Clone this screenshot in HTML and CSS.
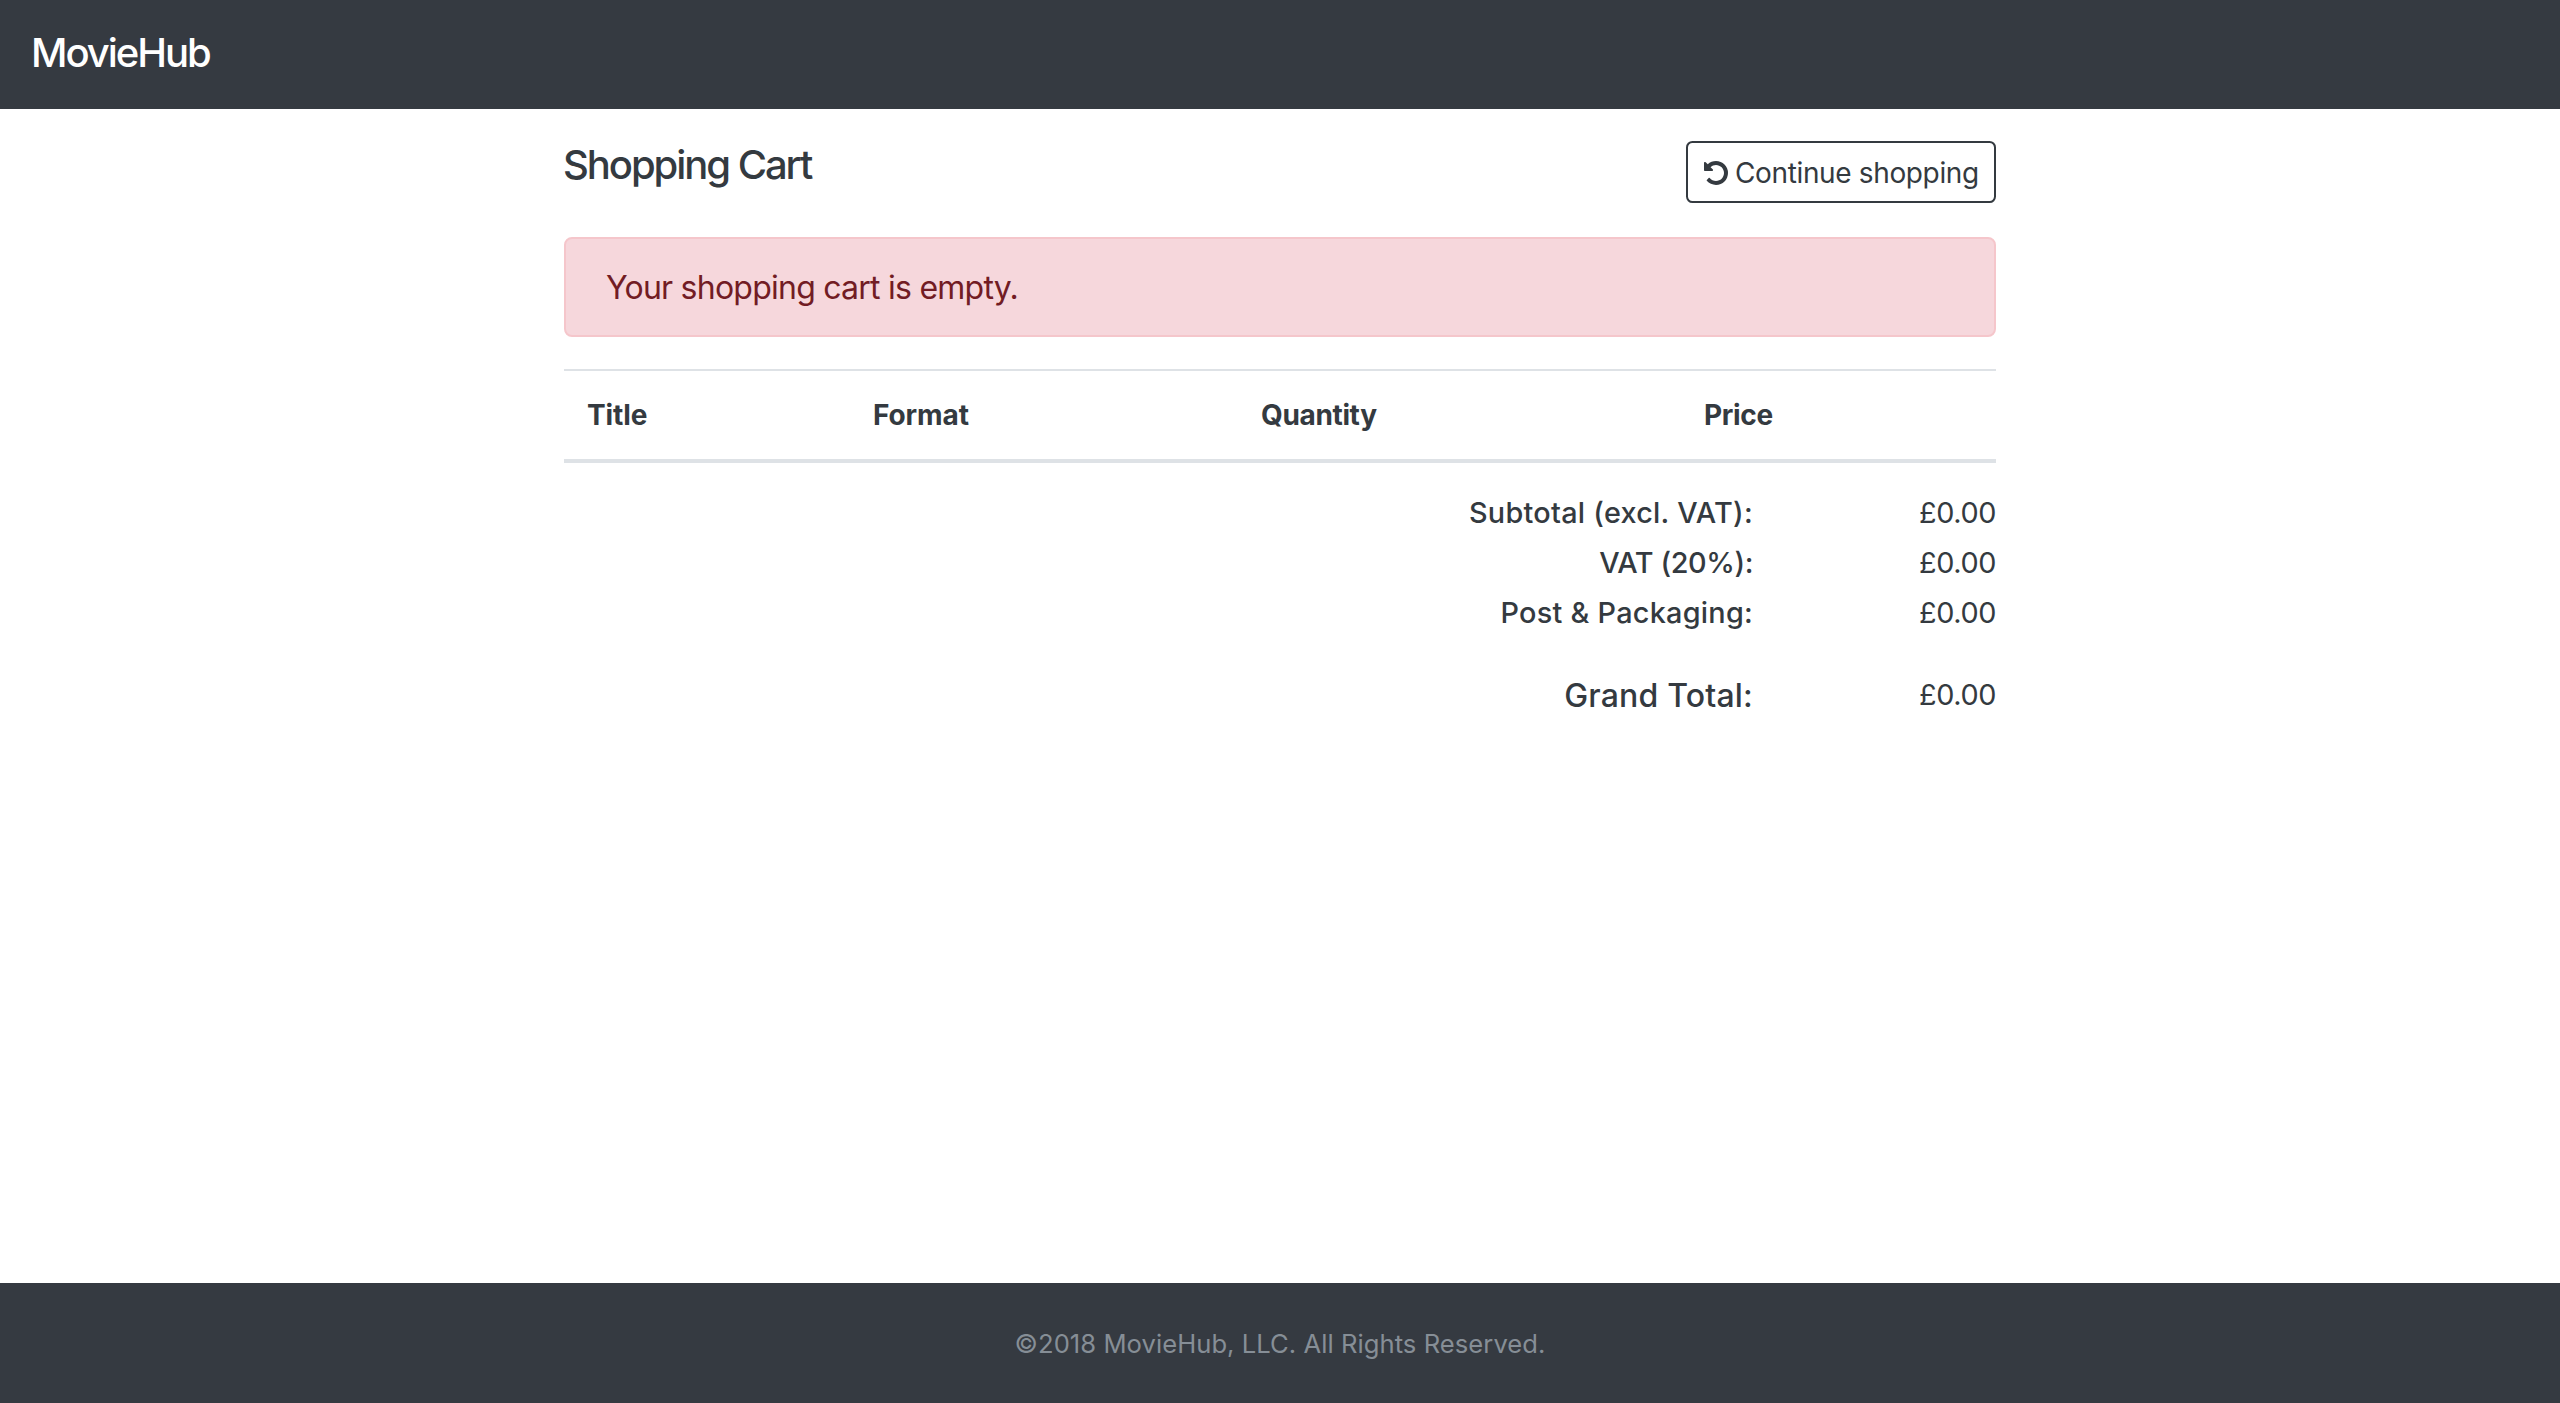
FILE: index.html
```
<!DOCTYPE html>
<html lang="en">
<head>
<meta charset="utf-8">
<title>MovieHub</title>
<link rel="stylesheet" href="styles.css">
</head>
<body>
<header class="navbar"><a class="brand">MovieHub</a></header>
<main class="container">
  <div class="cart-head">
    <h1 class="cart-title">Shopping Cart</h1>
    <a class="btn-continue">
      <svg class="icon-undo" viewBox="0 128 1536 1536" aria-hidden="true"><path fill="currentColor" d="M1536 896q0 156-61 298t-164 245-245 164-298 61q-172 0-327-72.5T177 1387q-7-10-6.5-22.5T179 1344l137-138q10-9 25-9 16 2 23 12 73 95 179 147t225 52q104 0 198.5-40.5T1130 1258t109.5-163.5T1280 896t-40.5-198.5T1130 534 966.5 424.5 768 384q-98 0-188 35.5T420 521l137 138q31 30 14 69-17 40-59 40H64q-26 0-45-19T0 704V256q0-42 40-59 39-17 69 14l130 129q107-101 244.5-156.5T768 128q156 0 298 61t245 164 164 245 61 298z"/></svg>
      <span>Continue shopping</span>
    </a>
  </div>
  <div class="alert">Your shopping cart is empty.</div>
  <table class="cart-table">
    <colgroup><col class="col-title"><col class="col-format"><col class="col-quantity"><col class="col-price"></colgroup>
    <thead><tr><th>Title</th><th>Format</th><th class="snug">Quantity</th><th class="snug">Price</th></tr></thead>
  </table>
  <dl class="totals">
    <dt>Subtotal (excl. VAT):</dt><dd>£0.00</dd>
    <dt class="vat">VAT (20%):</dt><dd>£0.00</dd>
    <dt>Post &amp; Packaging:</dt><dd>£0.00</dd>
    <dt class="grand">Grand Total:</dt><dd class="grand-value">£0.00</dd>
  </dl>
</main>
<footer class="footer">©2018 MovieHub, LLC. All Rights Reserved.</footer>
</body>
</html>
```

FILE: styles.css
```
* { box-sizing: border-box; }
body {
  margin: 0;
  min-height: 100vh;
  display: flex;
  flex-direction: column;
  background: #fff;
  color: #343a40;
  font-family: Inter, "Liberation Sans", sans-serif;
  font-size: 28px;
}
.navbar {
  height: 109px;
  padding: 23px 31px;
  background: #353a41;
}
.brand {
  display: block;
  color: #fff;
  font-size: 40px;
  font-weight: 500;
  line-height: 60px;
  letter-spacing: -2.05px;
}
.container {
  width: 1432px;
  margin: 0 auto;
  padding-top: 32px;
  flex: 1;
}
.cart-head {
  display: flex;
  justify-content: space-between;
  align-items: flex-start;
  height: 96px;
}
.cart-title {
  margin: 0 0 0 -1px;
  font-size: 40px;
  font-weight: 500;
  line-height: 48px;
  letter-spacing: -2.05px;
}
.btn-continue {
  display: flex;
  align-items: center;
  gap: 7px;
  width: 310px;
  height: 62px;
  padding: 1px 0 0 16px;
  border: 2px solid #343a40;
  border-radius: 6.4px;
  letter-spacing: -0.36px;
  white-space: nowrap;
}
.icon-undo { width: 24px; height: 24px; flex: none; }
.alert {
  height: 100px;
  padding: 1px 40px 0;
  border: 2px solid #f5c6cb;
  border-radius: 8px;
  background: #f6d7dc;
  color: #721c24;
  font-size: 32px;
  line-height: 96px;
  letter-spacing: -0.76px;
}
.cart-table {
  width: 100%;
  margin-top: 32px;
  table-layout: fixed;
  border-spacing: 0;
}
.col-title { width: 286px; }
.col-format { width: 387px; }
.col-quantity { width: 443px; }
.col-price { width: 316px; }
.cart-table th {
  height: 94px;
  padding: 0 23px;
  border-top: 2px solid #dee2e6;
  border-bottom: 4px solid #dee2e6;
  text-align: left;
  font-weight: 700;
  letter-spacing: -0.1px;
}
.cart-table th.snug { padding-left: 24px; letter-spacing: -0.35px; }
.totals {
  display: grid;
  grid-template-columns: 1189px 1fr;
  grid-auto-rows: 50px;
  margin: 25px 0 0;
  font-size: 28.8px;
  line-height: 50px;
  text-align: right;
}
.totals dt { font-weight: 500; letter-spacing: 0.27px; }
.totals dt.vat { letter-spacing: -0.4px; }
.totals dd { margin: 0; letter-spacing: -0.4px; }
.totals dt.grand { margin-top: 33px; font-size: 32px; letter-spacing: 0.18px; }
.totals dd.grand-value { margin-top: 32px; }
.footer {
  height: 120px;
  padding-top: 1px;
  background: #353a41;
  color: #868e96;
  font-size: 25.6px;
  line-height: 120px;
  letter-spacing: 0.05px;
  text-align: center;
}
```
